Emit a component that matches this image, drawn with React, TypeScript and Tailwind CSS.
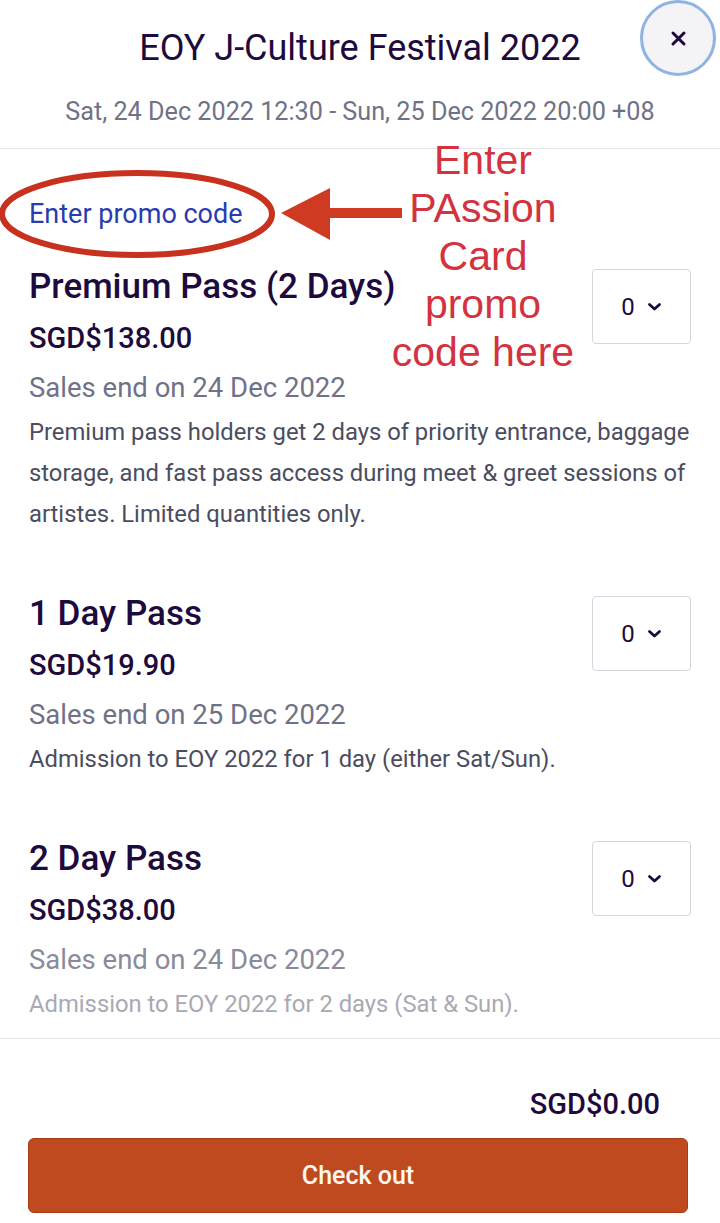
import React from "react";

const Select = () => (
  <div className="w-[99px] h-[75px] shrink-0 border border-[#d6d5dd] rounded-[4px] flex items-center justify-center gap-[12px] bg-white">
    <span className="text-[24px] text-[#1e0a3c]">0</span>
    <svg width="15" height="10" viewBox="0 0 15 10" className="mt-[1px]">
      <path d="M2.5 2.5 L7.5 7 L12.5 2.5" fill="none" stroke="#1e0a3c" strokeWidth="2.8" strokeLinecap="round" strokeLinejoin="round" />
    </svg>
  </div>
);

type T = { title: string; price: string; sales: string; desc: string[]; faded?: boolean };

const Ticket = ({ t }: { t: T }) => (
  <div className="flex flex-col">
    <div className="flex justify-between items-start">
      <div className="flex flex-col">
        <div className="h-[50px] leading-[50px] text-[35px] font-medium text-[#1e0a3c]">{t.title}</div>
        <div className="h-[52px] leading-[52px] text-[29px] font-medium text-[#1e0a3c]">{t.price}</div>
        <div className={`h-[48px] leading-[48px] text-[27.5px] ${t.faded ? "text-[#8a8b9a]" : "text-[#6f7287]"}`}>{t.sales}</div>
      </div>
      <div className="mt-[7px]">
        <Select />
      </div>
    </div>
    <div className={`text-[23.8px] leading-[41px] whitespace-nowrap ${t.faded ? "text-[#a9a9b3]" : "text-[#4b4d5f]"}`}>
      {t.desc.map((d, i) => (
        <div key={i}>{d}</div>
      ))}
    </div>
  </div>
);

export default function App() {
  const tickets: T[] = [
    {
      title: "Premium Pass (2 Days)",
      price: "SGD$138.00",
      sales: "Sales end on 24 Dec 2022",
      desc: [
        "Premium pass holders get 2 days of priority entrance, baggage",
        "storage, and fast pass access during meet & greet sessions of",
        "artistes. Limited quantities only.",
      ],
    },
    {
      title: "1 Day Pass",
      price: "SGD$19.90",
      sales: "Sales end on 25 Dec 2022",
      desc: ["Admission to EOY 2022 for 1 day (either Sat/Sun)."],
    },
    {
      title: "2 Day Pass",
      price: "SGD$38.00",
      sales: "Sales end on 24 Dec 2022",
      desc: ["Admission to EOY 2022 for 2 days (Sat & Sun)."],
      faded: true,
    },
  ];

  return (
    <div className="w-[720px] h-[1223px] bg-white overflow-hidden relative" style={{ fontFamily: "Roboto, 'Noto Sans', sans-serif" }}>
      {/* Header */}
      <div className="grid grid-cols-[80px_1fr_80px] items-center pt-[20px] h-[64px]">
        <div />
        <div className="text-center text-[36px] leading-[44px] text-[#1e0a3c] whitespace-nowrap">EOY J-Culture Festival 2022</div>
        <div className="flex justify-start -mt-[20px]">
          <div className="w-[76px] h-[76px] rounded-full border-[3px] border-[#8fb3e2] bg-[#f4f4f6] flex items-center justify-center">
            <svg width="17" height="17" viewBox="0 0 17 17">
              <path d="M3 3 L14 14 M14 3 L3 14" stroke="#1e0a3c" strokeWidth="3" strokeLinecap="round" />
            </svg>
          </div>
        </div>
      </div>
      <div className="mt-[33px] text-center text-[25.2px] leading-[30px] text-[#6f7287] whitespace-nowrap">
        Sat, 24 Dec 2022 12:30 - Sun, 25 Dec 2022 20:00 +08
      </div>
      <div className="mt-[21px] border-t border-[#e3e3e6]" />

      {/* Body */}
      <div className="px-[29px] pt-[50px] flex flex-col">
        <div className="text-[27px] leading-[30px] text-[#2a3bb0]">Enter promo code</div>
        <div className="mt-[33px] flex flex-col gap-[54px]">
          {tickets.map((t) => (
            <Ticket key={t.title} t={t} />
          ))}
        </div>
      </div>
      <div className="mt-[13px] border-t border-[#e3e3e6]" />

      {/* Footer */}
      <div className="pt-[50px] pr-[60px] text-right text-[29px] leading-[30px] font-medium text-[#1e0a3c]">SGD$0.00</div>
      <div className="px-[28px] mt-[19px]">
        <div className="h-[75px] w-[660px] rounded-[6px] bg-[#c04a20] border border-[#a83a14] flex items-center justify-center text-[#fff8f0] text-[25px] font-medium">
          Check out
        </div>
      </div>

      {/* Annotation overlay */}
      <svg className="absolute left-0 top-0 pointer-events-none" width="720" height="1223">
        <ellipse cx="137" cy="214" rx="135" ry="41" fill="none" stroke="#c8311d" strokeWidth="6" />
        <polygon points="281,213 330,188 330,240" fill="#cf3a22" />
        <rect x="326" y="208" width="76" height="10" fill="#cf3a22" />
      </svg>
      <div
        className="absolute left-[383px] top-[136px] w-[200px] text-center text-[41px] leading-[48px] text-[#d3323f]"
        style={{ fontFamily: "'Liberation Sans', Arial, sans-serif" }}
      >
        <div>Enter</div>
        <div>PAssion</div>
        <div>Card</div>
        <div>promo</div>
        <div>code here</div>
      </div>
    </div>
  );
}
